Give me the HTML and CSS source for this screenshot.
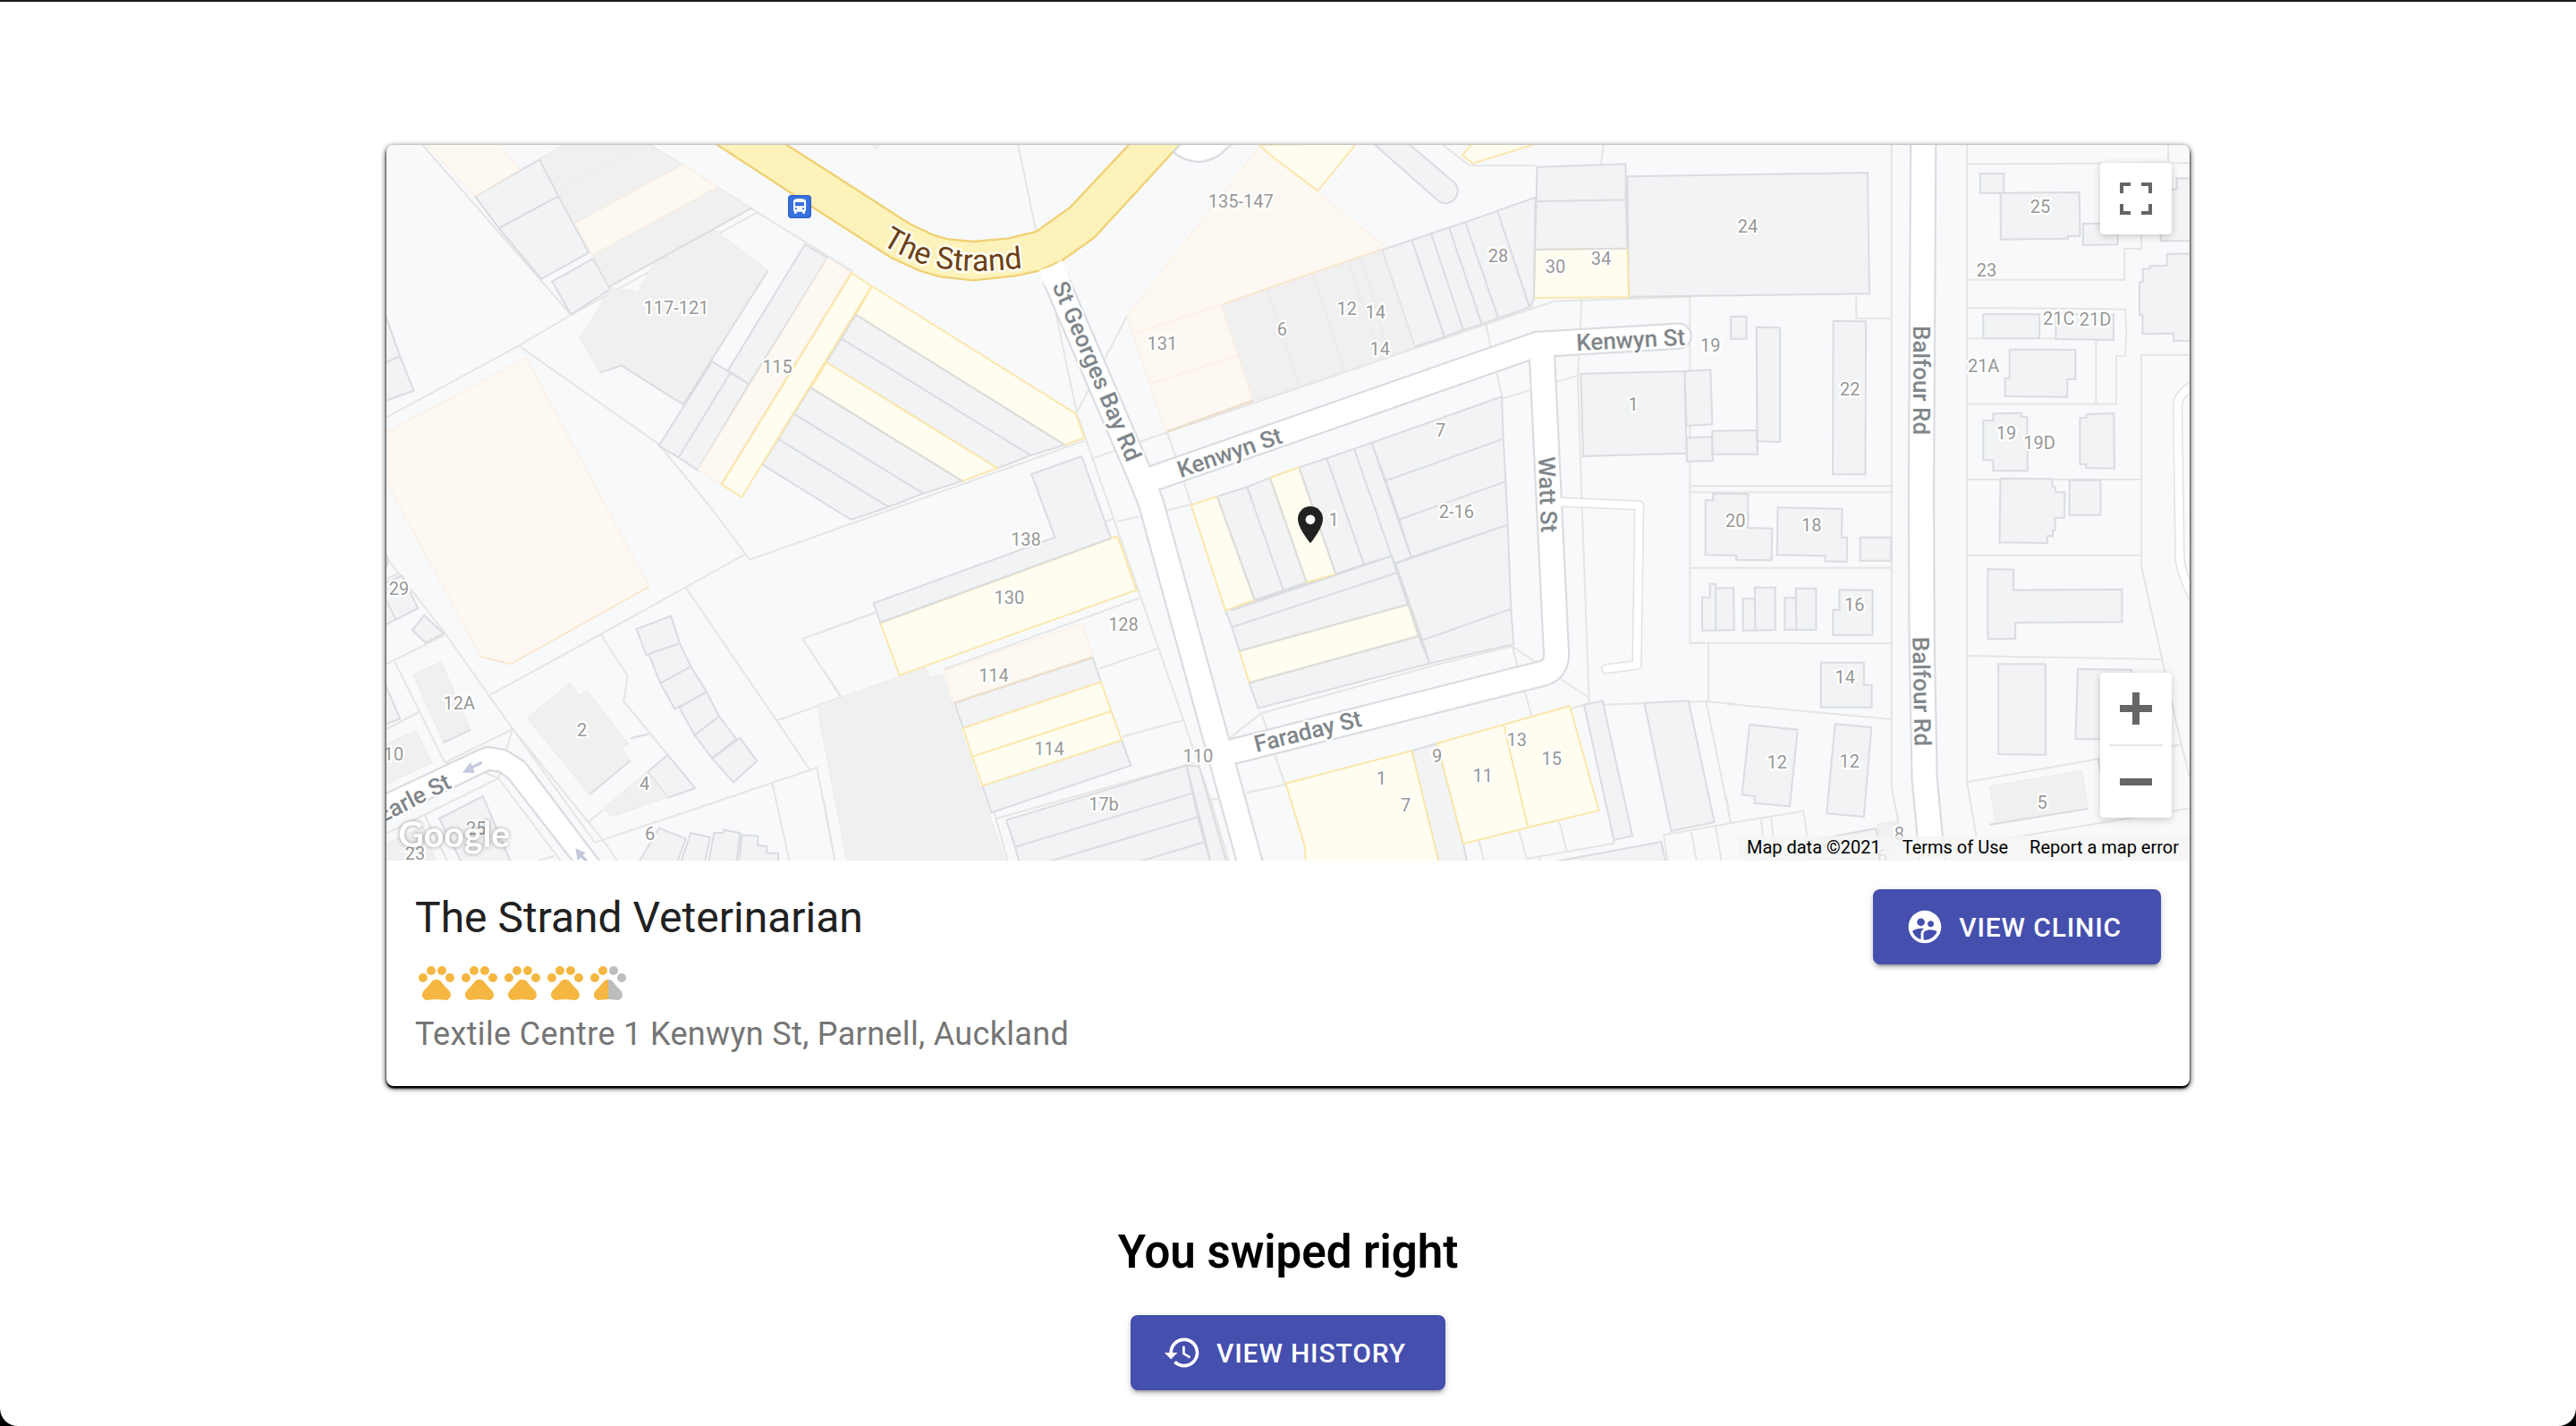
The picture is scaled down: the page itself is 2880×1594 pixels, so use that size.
FILE: index.html
```html
<!DOCTYPE html>
<html lang="en">
<head>
<meta charset="utf-8">
<meta name="viewport" content="width=device-width, initial-scale=1">
<title>The Strand Veterinarian</title>
<link rel="stylesheet" href="styles.css">
</head>
<body>
<main class="page">
  <article class="card">
    <div class="map">
      <svg class="map-canvas" viewBox="0 0 6048 2400" role="img" aria-label="Map of Parnell, Auckland">
        <!-- property boundaries -->
        <g class="parcel">
          <path transform="translate(-36 -36)" d="M157 36L655 606M36 950L480 709L655 606L1280 262M910 30L1280 262L1600 460M480 709L950 1040L1130 1260"/>
          <path transform="translate(1464 -36)" d="M-245 1427L878 1028M-370 1260L-245 1427M655 36L715 325M775 570L852 937L965 1260L1065 1550L1210 1965L1255 2100L1300 2230L1360 2436M1020 610L850 937M905 1087L1155 1000L1185 1085M1210 1165L1235 1240"/>
          <path transform="translate(2964 -36)" d="M-346 1000L870 588L955 560L1410 545M725 640L740 718M878 550V590M760 800L778 880L782 886L955 833L1035 808M1045 550L1040 660L1032 810L1045 1220L1070 1905M1408 545V1706H1470V1900M580 36L667 104L895 106M1118 36L1110 100M-30 1942L535 1785L812 1717L890 1770M812 1717L830 1785M-30 1942L-135 2025M-30 1942L-10 1995"/>
          <path transform="translate(4494 -36) scale(1.014 1)" d="M547 36V2190L570 2310M796 36V2170L828 2360M796 100L1534 97M1462 36V97M797 488H1317V384H1373V330M797 582L1320 587L1323 660L1320 743H1290V905H797M797 685H1223V903M797 1158H1373M1534 740H1373V1450L1505 2045L1534 2160M430 543V618H545M-120 1180H545M-120 1201H545"/>
          <path transform="translate(-36 1194)" d="M36 190L230 440L460 765L735 1145M36 547L230 450M62 535L232 877L260 880M36 765L145 708M232 877L460 765L437 835M385 650L755 447L1240 178M755 447L845 587L832 672L980 852M1040 290L1345 737L1455 900M1345 737L1560 658L1432 462L1675 375M735 1145L1480 895L1540 1206M1330 945L1387 1206M715 1075L765 1035M460 765L765 1140L810 1206M370 912L412 930L620 1206M36 1115L412 930L418 905M165 1055L240 1206M545 1206L600 1190M36 262L80 240"/>
          <path transform="translate(1464 1194)" d="M0 437L172 375M405 565L1068 323M925 563L1128 493M1005 790L1210 735M0 565L62 655M0 990L40 1206M582 1065L1245 878M575 1045L620 1206M950 68L975 60M985 70L1058 52M1150 32L1235 12M1300 1000L1325 998M1420 978L1550 952M1515 850L1550 950"/>
          <path transform="translate(2964 1194)" d="M853 635L877 720M975 597L1070 660M1010 695L1053 685M1115 683L1462 672L1560 680M1462 672L1545 1080M1320 1120L1560 1078M1320 1120L1333 1206M1412 1105L1430 1206M1495 1093L1513 1206M700 1140L718 1206M835 1107L860 1200M970 1075L995 1175M860 1200L1155 1148M1153 1137V1150M905 1192V1206"/>
          <path transform="translate(4494 1194) scale(1.014 1)" d="M-120 224H545M-120 476L545 478M0 680L545 732M797 182H1375M797 519L1442 531M800 942L1230 865M1473 822L1505 817M840 1147L970 1125L1534 1030M0 1082L255 1040L270 1140M115 1065L130 1206M148 1062L165 1206M0 990L14 1080M315 1130L322 1206"/>
        </g>

        <!-- plain buildings -->
        <g class="bldg">
          <g transform="translate(-36 -36)">
            <path d="M333 208L549 85L613 208L413 315ZM413 315L613 208L715 397L555 486ZM592 494L729 417L787 520L655 604Z"/>
            <path d="M1440 370L1516 415L1252 838L1182 792ZM1128 762L1190 800L1016 1084L950 1045ZM1190 800L1252 838L1080 1127L1016 1084Z"/>
            <path d="M30 600L82 745L30 767ZM30 767L82 745L128 860L30 895Z"/>
          </g>
          <g transform="translate(1464 -36)">
            <path d="M110 605L812 1042L697 1077L62 685ZM62 685L697 1077L585 1120L12 765ZM-42 850L467 1163L337 1205L-97 938ZM-97 938L337 1205L220 1250L-150 1022ZM-150 1022L220 1250L95 1293L-203 1108Z"/>
            <path d="M700 1140L868 1080L966 1355L193 1638L170 1573L778 1352Z"/>
          </g>
          <g transform="translate(2964 -36)">
            <path d="M375 388L475 355L585 680L485 713ZM475 355L540 333L648 657L585 680ZM540 333L600 313L710 637L648 657ZM600 313L655 295L765 617L710 637ZM655 295L762 257L870 580L765 617ZM762 257L890 212L885 550L870 580Z"/>
            <path d="M345 30L568 227A42 42 0 0 0 622 166L462 30Z"/>
            <path d="M895 110L1193 100V220L893 225ZM893 225L1193 220L1198 383L888 387ZM1198 142L2004 129L2010 535L1203 545Z"/>
            <path d="M1042 803L1390 795L1397 1070L1050 1080ZM1390 795L1477 790L1483 973L1397 978ZM1483 995L1633 993L1635 1073L1483 1073ZM1397 1018L1483 1015L1485 1095L1398 1097Z"/>
            <path d="M340 1035L777 880L782 1022L388 1162ZM388 1162L782 1022L790 1165L433 1292ZM433 1292L790 1165L797 1310L473 1418ZM420 1440L797 1310L808 1592L510 1697ZM510 1697L808 1592L817 1710L535 1775Z"/>
            <path d="M-178 1215L-77 1183L45 1530L-52 1562ZM-77 1183L0 1152L122 1503L45 1530ZM97 1117L190 1087L315 1443L220 1475ZM190 1087L282 1055L407 1415L315 1443ZM282 1055L340 1035L473 1418L420 1440L407 1415Z"/>
            <path d="M-150 1597L407 1415L427 1470L-128 1653ZM-128 1653L427 1470L463 1577L-103 1733ZM-70 1840L498 1683L535 1775L-40 1925ZM407 1415L420 1440L510 1697L498 1683Z"/>
          </g>
          <g transform="translate(4494 -36) scale(1.014 1)">
            <path d="M840 132H918V197H840ZM907 197L1168 195L1170 342H1130V350L908 353ZM1180 300H1295V370L1180 372ZM1540 148H1490V185H1437V358H1540ZM1540 400L1458 402V440L1402 442V450L1378 452V495L1367 497V605H1377V670L1480 668V693H1540Z"/>
            <path d="M850 604H1036V685H850ZM1090 604H1281V690L1090 687ZM937 722L1155 723V822H1128V881L922 879V818H937ZM883 937L977 935V947H995L997 1129H883V1094L850 1092V960H883ZM1192 939L1282 936L1284 1121L1190 1119V1107H1170V952L1192 950Z"/>
            <path d="M907 1154L1078 1156L1080 1183H1089V1200L1120 1201L1118 1287H1088V1328H1080V1348H1062V1371L904 1369ZM1135 1160H1238V1277H1135ZM15 611H67V686H15ZM100 647L178 649V1032L102 1030ZM354 626L462 628L460 1141L352 1140Z"/>
          </g>
          <g transform="translate(-36 1194)">
            <path d="M30 170Q50 195 36 220ZM30 275L88 250L142 360L68 398L30 417ZM36 335L68 398M123 433L163 383L228 445L167 475ZM30 610L82 730L30 750Z"/>
            <path d="M912 908L980 852L1072 963L980 995ZM875 429L991 386L1020 477L907 516ZM916 514L1020 477L1057 555L955 611ZM955 611L1057 555L1110 640L1003 698ZM1018 692L1110 640L1152 722L1070 785ZM1070 785L1152 722L1210 798L1128 863ZM1128 863L1222 795L1279 872L1200 944Z"/>
            <path d="M213 1065L360 990L455 1216H290ZM880 1216L950 1097L1040 1132L1010 1216ZM1022 1216L1057 1113L1122 1128L1103 1216ZM1116 1216L1135 1113H1165L1167 1103L1222 1113L1210 1216ZM1218 1216L1228 1120L1282 1123V1155L1312 1158V1180L1350 1183V1216Z"/>
          </g>
          <g transform="translate(1464 1194)">
            <path d="M441 677L905 525L933 607L470 762ZM535 955L1002 802L1033 887L565 1045Z"/>
            <path d="M615 1070L1220 887L1240 980L645 1160ZM645 1160L1240 980L1258 1060L735 1216H660ZM1258 1060L1280 1143L1040 1216H735ZM1280 1143L1302 1216H1040ZM1220 887L1262 890L1355 1216H1302Z"/>
          </g>
          <g transform="translate(2964 1194)">
            <path d="M475 838L560 813L648 1150L662 1216H567ZM1053 683L1115 670L1215 1123L1153 1137ZM1255 677L1403 670L1490 1077L1345 1107ZM940 1212L1312 1143L1327 1216Z"/>
          </g>
          <g transform="translate(4494 1194) scale(1.014 1)">
            <path d="M170 22L383 26L382 122H400L399 204L327 202V184L168 181ZM-44 -25L72 -23V90L152 92L150 199L33 197V183L-69 181V-2H-44ZM443 122H545V200H443Z"/>
            <path d="M374 298L484 299V449L353 450V365H374ZM313 542H455V617H481V692H313ZM77 750L236 767L210 1024L93 1013L94 990L52 985ZM360 748L480 759L455 1059L332 1048Z"/>
            <path d="M94 290H162V432L96 434ZM55 328H94L96 434H55ZM230 293H297V432H232ZM193 325H230L232 432H193ZM-35 292H24L26 432L-35 434ZM-80 323H-54V278H-35V434H-80Z"/>
            <path d="M865 228L950 230V299L1309 296V406L956 408V462L865 463ZM900 547H1056L1057 851L900 849ZM1163 563L1340 566V800L1155 798ZM262 1142L495 1098L525 1216H275Z"/>
            <path d="M1230 865L1245 940L1260 930V865Z"/>
          </g>
        </g>

        <!-- older buildings -->
        <g class="grey">
          <path transform="translate(-36 -36)" d="M549 80L640 30H910L1030 102L670 298ZM612 190L900 36M727 405L1146 177L1260 248L783 512ZM790 515L880 528L940 423L1132 317L1316 457L1032 907L825 775L752 800L685 685Z"/>
          <path transform="translate(1464 -36)" d="M160 30H195L180 52Z"/>
          <path transform="translate(2964 -36)" d="M-165 572L0 512L145 465L248 795L0 880L-57 893ZM145 465L375 390L485 713L250 797ZM-10 515L100 850M262 430L375 755M305 415L400 735"/>
          <path transform="translate(-36 1194)" d="M125 582L220 540L318 768L227 810ZM30 818L135 770L188 878L30 953ZM508 728L650 611L685 653L708 636L848 812L825 830L855 870L717 985ZM765 1030L910 908L980 993L790 1058ZM835 972L878 1030M30 1152L160 1090L205 1216H30Z"/>
          <path transform="translate(1464 1194)" d="M-20 687L345 558L358 593L400 582L615 1216H82Z"/>
          <path transform="translate(4494 1194) scale(1.014 1)" d="M870 957L1177 905L1197 1032L892 1085ZM500 1085L565 1072L590 1150L520 1170Z"/>
        </g>
        <path class="edge" d="M747 476L1224 212M716 764L789 740L996 871M1280 421L996 871M881 1975L819 1990M681 2179L819 2064M191 2004L282 1962M5376 2279L5708 2226"/>

        <!-- commercial buildings -->
        <g class="tan">
          <path transform="translate(-36 -36)" d="M165 30H410L483 120L333 208ZM670 298L1030 102L1146 177L727 405ZM1516 415L1597 465L1160 1175L1080 1127ZM30 1003L505 750L917 1517L453 1777L353 1752L30 1155Z"/>
          <path transform="translate(1464 -36)" d="M1465 40L1655 190L1890 380L1500 512L1335 572L1443 893L1153 998L1020 610ZM1045 668L1335 572M1100 835L1390 742"/>
          <path transform="translate(1464 1194)" d="M405 570L868 411L905 522L441 677Z"/>
        </g>
        <path class="tan-edge" d="M1561 429L1124 1139M2617 962L2907 857M1905 1871L2369 1718"/>
        <path class="tan-line" d="M417 1741L881 1481M317 1716L417 1741M2799 536L3339 350"/>

        <g class="yellow">
          <path transform="translate(-36 -36)" d="M1597 465L1663 510L1228 1217L1160 1175Z"/>
          <path transform="translate(1464 -36)" d="M165 510L848 937L878 1018L812 1042L110 605ZM12 765L585 1120L467 1163L-40 850Z"/>
          <path transform="translate(2964 -36)" d="M-35 36L0 70L160 190L290 30ZM645 70L680 30H900L680 98ZM888 387L1198 383L1203 546L885 549ZM-265 1243L-178 1215L-52 1562L-150 1597ZM0 1152L97 1117L220 1475L122 1503ZM-103 1733L463 1577L498 1683L-70 1840Z"/>
          <path transform="translate(1464 1194)" d="M193 410L988 118L1052 298L257 584ZM470 762L933 607L967 705L501 857ZM501 857L967 705L1002 802L535 955Z"/>
          <path transform="translate(2964 1194)" d="M52 947L475 838L567 1216H120L117 1160ZM560 813L783 750L865 1095L648 1150ZM783 750L1005 687L1103 1038L865 1095Z"/>
        </g>
        <path class="bldg-line" d="M1574 569L2276 1006M1424 814L1931 1127M2786 1179L2912 1526M2964 1116L3086 1467M3061 1081L3184 1439M2861 1697L3427 1541L3462 1647L2894 1804M2834 1561L3371 1379M3852 351L3849 513M3852 351L4162 347M1657 1602L2430 1319"/>

        <!-- main road -->
        <path class="highway" transform="translate(1464 -36)" d="M-140 24L0 113L290 300L370 338L420 352L505 360L620 350L715 327L830 245L1037 24H1207L910 347L800 425L725 458L645 475L505 490L395 478L325 458L230 415L0 267L-372 24Z"/>
        <path class="street-edge" transform="translate(1464 -36)" d="M1175 60Q1250 120 1330 70L1375 30L1205 28Z"/>

        <!-- minor streets, casing below and surface above -->
        <g class="casing">
          <path transform="translate(2964 -36)" d="M-716 494L-430 1160L-400 1235L-60 2470M-420 1164L895 705L1370 677M910 705L960 1740Q962 1795 915 1808L-125 2070"/>
          <path transform="translate(4494 -36)" d="M661 0L654 1200L656 1700L665 2160L695 2480"/>
        </g>
        <g class="lane-casing">
          <path transform="translate(2964 1194)" d="M970 3L1238 15L1230 550L1127 563"/>
          <path transform="translate(4494 -36)" d="M1590 830Q1514 865 1514 910L1521 1420Q1524 1480 1590 1600"/>
        </g>
        <g class="surface">
          <path transform="translate(2964 -36)" d="M-720 485L-430 1160L-400 1235L-60 2470M-420 1164L895 705L1370 677M910 705L960 1740Q962 1795 915 1808L-125 2070"/>
          <path transform="translate(4494 -36)" d="M661 0L654 1200L656 1700L665 2160L695 2480"/>
        </g>
        <path class="mouth" transform="translate(1464 -36)" d="M725 455Q765 450 800 422L830 490L745 510Z"/>
        <g class="lane">
          <path transform="translate(2964 1194)" d="M960 3L1238 15L1230 550L1127 563"/>
          <path transform="translate(4494 -36)" d="M1590 830Q1514 865 1514 910L1521 1420Q1524 1480 1590 1600"/>
        </g>
        <path class="street-edge" transform="translate(-36 1194)" d="M20 988L355 830Q370 822 390 827L437 835L500 875L765 1226H675L445 930L415 908L380 903L20 1078Z"/>
        <path class="arrow" transform="translate(-36 1194)" d="M354 872L358 882L327 896L332 912L291 911L318 876L324 888ZM670 1165L705 1180L695 1187L712 1206H700L688 1196L677 1205Z"/>

        <g class="number">
          <g transform="translate(-36 -36)"><text x="1008" y="603">117-121</text><text x="1347" y="801">115</text></g>
          <g transform="translate(1464 -36)"><text x="1402" y="246">135-147</text><text x="1138" y="723">131</text></g>
          <g transform="translate(2964 -36)"><text x="40" y="676">6</text><text x="257" y="606">12</text><text x="353" y="617">14</text><text x="368" y="742">14</text><text x="765" y="430">28</text><text x="957" y="465">30</text><text x="1110" y="438">34</text><text x="572" y="1014">7</text><text x="1218" y="928">1</text><text x="1477" y="729">19</text></g>
          <g transform="translate(4494 -36)"><text x="72" y="331">24</text><text x="1053" y="265">25</text><text x="873" y="478">23</text><text x="1115" y="640">21C</text><text x="1238" y="642">21D</text><text x="863" y="798">21A</text><text x="415" y="877">22</text><text x="939" y="1023">19</text><text x="1050" y="1056">19D</text></g>
          <g transform="translate(-36 1194)"><text x="78" y="315">29</text><text x="280" y="699">12A</text><text x="692" y="790">2</text><text x="60" y="870">10</text><text x="902" y="968">4</text><text x="337" y="1120">25</text><text x="920" y="1137">6</text><text x="132" y="1203">23</text></g>
          <g transform="translate(1464 1194)"><text x="681" y="151">138</text><text x="625" y="345">130</text><text x="1008" y="435">128</text><text x="573" y="606">114</text><text x="759" y="852">114</text><text x="1258" y="877">110</text><text x="942" y="1038">17b</text></g>
          <g transform="translate(2964 1194)"><text x="213" y="84">1</text><text x="625" y="57">2-16</text><text x="373" y="950">1</text><text x="455" y="1041">7</text><text x="560" y="876">9</text><text x="713" y="942">11</text><text x="827" y="822">13</text><text x="944" y="885">15</text></g>
          <g transform="translate(4494 1194)"><text x="31" y="88">20</text><text x="286" y="102">18</text><text x="430" y="369">16</text><text x="398" y="612">14</text><text x="170" y="897">12</text><text x="413" y="894">12</text><text x="1059" y="1032">5</text><text x="580" y="1138">8</text><text x="523" y="1213">6</text></g>
        </g>

        <g class="street-name">
          <text transform="translate(2664 1117) rotate(-19)">Kenwyn St</text>
          <text transform="translate(3992 690) rotate(-3)">Kenwyn St</text>
          <text transform="translate(5121 606) rotate(90)">Balfour Rd</text>
          <text transform="translate(5119 1650) rotate(89)">Balfour Rd</text>
          <text transform="translate(3864 1046) rotate(88)">Watt St</text>
          <text transform="translate(2232 472) rotate(67)">St Georges Bay Rd</text>
          <text transform="translate(2918 2037) rotate(-14)">Faraday St</text>
          <text class="to-end" transform="translate(222 2154) rotate(-27)">Earle St</text>
        </g>
        <path id="strand-line" class="guide" d="M1660 332C1790 415 1910 446 2200 404"/>
        <text class="highway-name"><textPath href="#strand-line">The Strand</textPath></text>

        <g transform="translate(1347 168)">
          <rect class="bus-sign" x="2" y="2" width="74" height="74" rx="10"/>
          <path class="bus" d="M18 20Q18 12 39 12Q60 12 60 20V54H57V62H49V56H29V62H21V54H18Z"/>
          <path class="bus-hole" d="M24 24H54V37H24ZM24 43H30V49H24ZM48 43H54V49H48Z"/>
        </g>

        <g transform="translate(3027 1200) scale(6)">
          <path class="pin" d="M12 2C8.100 2 5 5.100 5 9c0 5.250 7 13.600 7 13.600s7-8.350 7-13.600c0-3.900-3.100-7-7-7z"/>
          <circle class="pin-dot" cx="12" cy="9.400" r="2.700"/>
        </g>

        <text class="google" x="40" y="2354">Google</text>
      </svg>

      <button class="control control-full" type="button" aria-label="Toggle fullscreen view">
        <svg viewBox="0 0 18 18" width="36" height="36" aria-hidden="true"><path d="M0 0v6h2V2h4V0zM16 0h-4v2h4v4h2V0zM16 16h-4v2h6v-6h-2zM2 12H0v6h6v-2H2z"/></svg>
      </button>
      <div class="control control-zoom">
        <button class="zoom-step" type="button" aria-label="Zoom in">
          <svg viewBox="0 0 18 18" width="36" height="36" aria-hidden="true"><path d="M7 0h4v7h7v4h-7v7H7v-7H0V7h7z"/></svg>
        </button>
        <div class="zoom-rule"></div>
        <button class="zoom-step" type="button" aria-label="Zoom out">
          <svg viewBox="0 0 18 18" width="36" height="36" aria-hidden="true"><path d="M0 7h18v4H0z"/></svg>
        </button>
      </div>
      <div class="credits">
        <span>Map data ©2021</span>
        <a href="#terms">Terms of Use</a>
        <a href="#report">Report a map error</a>
      </div>
    </div>

    <div class="details">
      <div class="summary">
        <h1 class="name">The Strand Veterinarian</h1>
        <svg class="rating" viewBox="0 0 120 24" width="240" height="48" role="img" aria-label="4.5 out of 5 paws">
          <defs>
            <linearGradient id="half" gradientUnits="userSpaceOnUse" x1="0" y1="0" x2="24" y2="0">
              <stop class="stop-on" offset="50%"/>
              <stop class="stop-off" offset="50%"/>
            </linearGradient>
            <g id="paw">
              <circle cx="4.500" cy="9.500" r="2.500"/><circle cx="9" cy="5.500" r="2.500"/><circle cx="15" cy="5.500" r="2.500"/><circle cx="19.500" cy="9.500" r="2.500"/>
              <path d="M17.340 14.860c-.87-1.020-1.600-1.890-2.480-2.910-.46-.54-1.050-1.080-1.750-1.320-.11-.04-.22-.07-.33-.09-.25-.04-.52-.04-.78-.04s-.53 0-.79.050c-.11.020-.22.050-.33.090-.7.240-1.280.780-1.750 1.320-.87 1.020-1.600 1.890-2.480 2.910-1.310 1.310-2.920 2.760-2.620 4.790.29 1.020 1.020 2.030 2.330 2.320.73.150 3.060-.44 5.540-.44h.18c2.480 0 4.810.58 5.540.44 1.310-.29 2.040-1.310 2.330-2.320.31-2.040-1.300-3.490-2.610-4.800z"/>
            </g>
          </defs>
          <use href="#paw"/><use href="#paw" x="24"/><use href="#paw" x="48"/><use href="#paw" x="72"/><use href="#paw" x="96" class="paw-half"/>
        </svg>
        <p class="address">Textile Centre 1 Kenwyn St, Parnell, Auckland</p>
      </div>
      <button class="button" type="button">
        <svg viewBox="0 0 24 24" width="44" height="44" aria-hidden="true"><path d="M11.990 2c-5.520 0-10 4.480-10 10s4.480 10 10 10 10-4.480 10-10-4.480-10-10-10zm3.610 6.340c1.070 0 1.930.86 1.930 1.930 0 1.070-.86 1.930-1.930 1.930-1.070 0-1.930-.86-1.930-1.930-.01-1.070.86-1.930 1.930-1.930zm-6-1.580c1.300 0 2.360 1.060 2.360 2.360 0 1.300-1.060 2.360-2.360 2.360s-2.360-1.060-2.360-2.360c0-1.310 1.050-2.360 2.360-2.360zm0 9.130v3.750c-2.400-.75-4.300-2.600-5.140-4.960 1.050-1.120 3.670-1.690 5.140-1.690.53 0 1.200.08 1.900.22-1.640.87-1.900 2.020-1.900 2.680zM11.990 20c-.27 0-.53-.01-.79-.04v-4.070c0-1.420 2.940-2.130 4.400-2.130 1.070 0 2.920.39 3.840 1.150-1.170 2.970-4.060 5.090-7.450 5.090z"/></svg>
        View clinic
      </button>
    </div>
  </article>

  <section class="result">
    <h2 class="result-title">You swiped right</h2>
    <button class="button" type="button">
      <svg viewBox="0 0 24 24" width="44" height="44" aria-hidden="true"><path d="M13 3c-4.970 0-9 4.030-9 9H1l3.890 3.890.07.14L9 12H6c0-3.870 3.130-7 7-7s7 3.130 7 7-3.130 7-7 7c-1.930 0-3.680-.79-4.940-2.060l-1.420 1.420C8.270 19.990 10.510 21 13 21c4.970 0 9-4.030 9-9s-4.030-9-9-9zm-1 5v5l4.280 2.540.72-1.210-3.500-2.080V8H12z"/></svg>
      View history
    </button>
  </section>
</main>
</body>
</html>
```
FILE: styles.css
```css
*, *::before, *::after { box-sizing: border-box; }

html { background: #000; }

body {
  margin: 0;
  font-family: Roboto, "Liberation Sans", sans-serif;
  color: #212121;
}

.page {
  display: flex;
  flex-direction: column;
  align-items: center;
  min-height: 100vh;
  padding: 160px 0 40px;
  border-top: 2px solid #1a1a1a;
  border-radius: 0 0 20px 20px;
  background: #fff;
}

.card {
  width: 70%;
  border-radius: 8px;
  background: #fff;
  box-shadow: 0 4px 2px -2px #000, 0 2px 2px 0 #000, 0 2px 6px 0 #000;
}

/* Map */
.map {
  position: relative;
  overflow: hidden;
  border-radius: 8px 8px 0 0;
  background: #f8f9fb;
}

.map-canvas { display: block; width: 100%; }

.parcel { fill: none; stroke: #e5e5e5; stroke-width: 6px; }
.bldg { fill: #f1f3f4; stroke: #dadce0; stroke-width: 6px; }
.bldg-line, .edge { fill: none; stroke: #dadce0; stroke-width: 6px; }
.grey { fill: #f0f0f0; stroke: #e6e6e6; stroke-width: 2px; }
.tan { fill: #fef8f2; stroke: #fbecd8; stroke-width: 3px; }
.tan-edge { fill: none; stroke: #ecdfcd; stroke-width: 8px; }
.tan-line { fill: none; stroke: #f9e6cb; stroke-width: 5px; }
.yellow { fill: #fffdf0; stroke: #fbe7ab; stroke-width: 6px; }
.highway { fill: #fdf2ba; stroke: #f0d073; stroke-width: 7px; }
.street-edge { fill: #fff; stroke: #dadce0; stroke-width: 7px; }
.mouth { fill: #fff; }

.casing, .surface, .lane-casing, .lane {
  fill: none;
  stroke-linecap: round;
  stroke-linejoin: round;
}
.casing { stroke: #dadce0; stroke-width: 91px; }
.surface { stroke: #fff; stroke-width: 78px; }
.lane-casing { stroke: #e2e2e4; stroke-width: 34px; }
.lane { stroke: #fff; stroke-width: 25px; }
.arrow { fill: #c5c9dc; }

.number {
  font-size: 60px;
  fill: #979797;
  stroke: #fff;
  stroke-width: 14px;
  stroke-linejoin: round;
  paint-order: stroke;
  text-anchor: middle;
}

.street-name {
  font-size: 78px;
  font-weight: 500;
  fill: #80868a;
  stroke: #fff;
  stroke-width: 14px;
  stroke-linejoin: round;
  paint-order: stroke;
}
.to-end { text-anchor: end; }

.guide { fill: none; }
.highway-name {
  font-size: 102px;
  fill: #6c3f17;
  stroke: #fffdf0;
  stroke-width: 16px;
  stroke-linejoin: round;
  paint-order: stroke;
}

.bus-sign { fill: #3871e0; stroke: #2b60c9; stroke-width: 4px; }
.bus { fill: #fff; }
.bus-hole { fill: #3871e0; }
.pin { fill: #212121; }
.pin-dot { fill: #fff; }

.google {
  font-family: Lato, Roboto, sans-serif;
  font-size: 118px;
  font-weight: 700;
  fill: #fff;
  filter: drop-shadow(0 0 6px rgba(0, 0, 0, 0.4));
}

.control {
  position: absolute;
  right: 20px;
  width: 80px;
  padding: 0;
  border: 0;
  border-radius: 4px;
  background: #fff;
  box-shadow: 0 2px 8px rgba(0, 0, 0, 0.2);
  fill: #666;
}

.control-full {
  top: 20px;
  display: grid;
  place-items: center;
  height: 80px;
}

.control-zoom { bottom: 48px; }

.zoom-step {
  display: grid;
  place-items: center;
  width: 100%;
  height: 80px;
  padding: 0;
  border: 0;
  background: none;
  fill: inherit;
}

.zoom-rule {
  height: 2px;
  margin: 0 10px;
  background: #e6e6e6;
}

.credits {
  position: absolute;
  right: 0;
  bottom: 0;
  display: flex;
  gap: 24px;
  padding: 0 12px 2px 10px;
  background: rgba(245, 245, 245, 0.8);
  color: #000;
  font-size: 20px;
  line-height: 26px;
}

.credits a { color: inherit; text-decoration: none; }

/* Clinic details */
.details {
  display: flex;
  align-items: flex-start;
  justify-content: space-between;
  gap: 32px;
  padding: 32px;
}

.name {
  margin: 0 0 16px;
  font-size: 48px;
  font-weight: 400;
  line-height: 64px;
}

.rating { display: block; fill: #f5b742; }
.paw-half { fill: url(#half); }
.stop-on { stop-color: #f5b742; }
.stop-off { stop-color: #bdbdbd; }

.address {
  margin: 8px 0 0;
  color: #757575;
  font-size: 36px;
  letter-spacing: 0.00938em;
  line-height: 52px;
}

.button {
  display: inline-flex;
  align-items: center;
  gap: 16px;
  height: 84px;
  padding: 0 44px 0 36px;
  border: 0;
  border-radius: 8px;
  background: #444fae;
  box-shadow: 0 6px 2px -4px rgba(0, 0, 0, 0.2), 0 4px 4px rgba(0, 0, 0, 0.14), 0 2px 10px rgba(0, 0, 0, 0.12);
  color: #fff;
  fill: #fff;
  font-family: inherit;
  font-size: 30px;
  font-weight: 500;
  letter-spacing: 0.02857em;
  text-transform: uppercase;
  white-space: nowrap;
}

.result {
  display: flex;
  flex-direction: column;
  align-items: center;
  gap: 32px;
  padding-top: 148px;
}

.result-title {
  margin: 0;
  color: #000;
  font-size: 51px;
  font-weight: 600;
  line-height: 76px;
}
```
